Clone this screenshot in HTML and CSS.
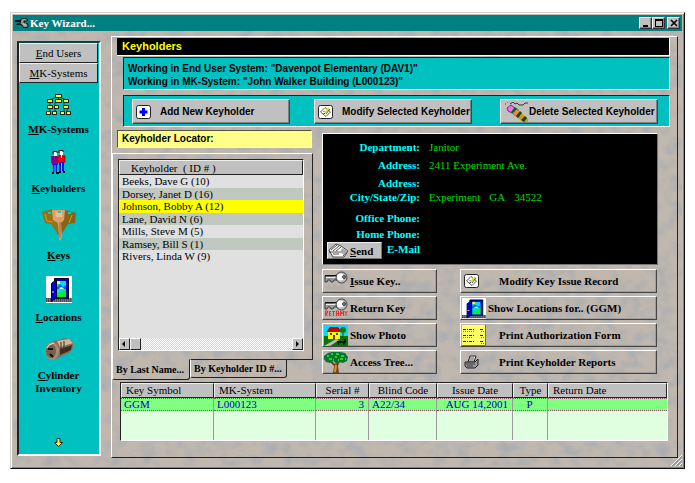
FILE: index.html
```html
<!DOCTYPE html>
<html lang="en">
<head>
<meta charset="utf-8">
<title>Key Wizard</title>
<link rel="stylesheet" href="styles.css">
</head>
<body>
<svg class="defs" aria-hidden="true">
  <defs>
    <filter id="marble" x="0" y="0" width="100%" height="100%" color-interpolation-filters="sRGB">
      <feTurbulence type="fractalNoise" baseFrequency="0.07 0.08" numOctaves="3" seed="7"/>
      <feColorMatrix values="0 0 0 0 0.67  0 0 0 0 0.68  0 0 0 0 0.69  2.6 0 0 0 -1.1"/>
    </filter>
    <symbol id="i-note" viewBox="0 0 15 14">
      <rect x=".5" y=".5" width="14" height="13" rx="2" fill="#fff" stroke="#222"/>
      <path d="M2.500 7 7 2.500l5.500 4.500L8 11.500z" fill="#fff" stroke="#333" stroke-width=".8"/>
      <path d="M5 6.500h2M5 8.500h2" stroke="#777" stroke-width=".7"/>
      <path d="m7 8 4-5" stroke="#dd0" stroke-width="2"/><path d="m8 9 4-5M6 9l1-1" stroke="#222" stroke-width=".7"/>
    </symbol>
    <symbol id="i-door" viewBox="0 0 26 27">
      <path fill="#fff" d="M0 0h26v27H0z"/><path fill="#777" d="M0 22h26v4H0z"/>
      <path d="M0 23h26M0 25h26" stroke="#222" stroke-dasharray="1 1"/>
      <path fill="#00c" stroke="#002" d="M8.500 2.500h14v20h-14z"/>
      <path fill="#0df" d="M11 5h9v16h-9z"/><path fill="#ff0" d="M11 5h3v3h-3z"/>
      <path fill="#06f" d="m11 11 3-3 3 3 3-2v4h-9z"/><path fill="#fff" d="m13 12 3-1 2 2h-4z"/>
      <path fill="#0e3" d="M11 17c4 0 5-3 9-4v8h-9z"/>
      <path fill="#00d" stroke="#002" d="m5.500 7.500 5-4v18l-5 4z"/><path d="M6 16h2" stroke="#ff0"/>
    </symbol>
    <symbol id="i-key" viewBox="0 0 24 21">
      <path d="M1 15h3v-2h2v2h3v-2h3v2h4v-2h5v6H3z" fill="#aaa" opacity=".55"/>
      <path d="M1 5h8l4-1v5h-3l-1 2H7L6 9H4L3 11H1z" fill="#999" stroke="#111" stroke-width=".7"/>
      <path d="M1 4.500h11" stroke="#111"/><path d="M2 6.500h10" stroke="#eee"/>
      <circle cx="17.500" cy="6.500" r="5.500" fill="#bbb" stroke="#222" stroke-width=".8"/><circle cx="16.500" cy="6" r="3.500" fill="#fff"/>
      <circle cx="20" cy="6" r="1.500" fill="#888" stroke="#111" stroke-width=".7"/>
    </symbol>
  </defs>
</svg>

<div class="window">
  <header class="titlebar">
    <svg class="app-icon" viewBox="0 0 14 10"><path d="M0 2h6v2H0zM2 5h5v2H1z" fill="#111"/><path d="m6 1 4-1 3 2-1 1-3 0v2l4 1v3l-4 1-2-3-2-1z" fill="#999" stroke="#111"/><path d="M8 6h3" stroke="#ddd"/></svg>
    <h1>Key Wizard...</h1>
    <div class="window-buttons">
      <button aria-label="Minimize"><svg viewBox="0 0 10 8"><path d="M2 6h5v2H2z"/></svg></button>
      <button aria-label="Maximize"><svg viewBox="0 0 10 8"><path d="M1 0h8v8H1zM2 2v5h6V2z" fill-rule="evenodd"/></svg></button>
      <button class="close" aria-label="Close"><svg viewBox="0 0 10 8"><path d="m2 1 6 6M8 1 2 7" stroke="#000" stroke-width="1.600"/></svg></button>
    </div>
  </header>

  <div class="workspace">
    <svg class="marble" aria-hidden="true"><rect width="100%" height="100%" filter="url(#marble)"/></svg>

    <nav class="sidebar">
      <button class="group"><u>E</u>nd Users</button>
      <button class="group"><u>M</u>K-Systems</button>
      <div class="nav-list">
        <a href="#systems"><span class="pic"><svg width="25" height="21" viewBox="0 0 25 21">
          <path d="M12.500 2v3M4 6l8-4 8 4M4 6v12M9 8v10M12 6v2M18 8v10M21 12v6" stroke="#222" stroke-width=".8" fill="none"/>
          <g fill="#222"><path d="M9 0h7v4H9zM1 5h6v4H1zM9 5h7v4H9zM17 5h6v4h-6zM1 11h6v4H1zM8 11h5v4H8zM17 11h6v4h-6zM0 17h5v4H0zM6 17h5v4H6zM14 17h5v4h-5zM20 17h5v4h-5z"/></g>
          <g fill="#ff0"><path d="M10 1h5v2h-5zM2 6h4v2H2zM10 6h5v2h-5zM18 6h4v2h-4zM2 12h4v2H2zM9 12h3v2H9zM18 12h4v2h-4zM1 18h3v2H1zM7 18h3v2H7zM15 18h3v2h-3zM21 18h3v2h-3z"/></g></svg></span><span><u>M</u>K-Systems</span></a>
        <a href="#keyholders"><span class="pic"><svg width="15" height="24" viewBox="0 0 15 24">
          <path d="M1 6h6v9H1zM0 6h1v7H0z" fill="#808"/><path d="M7 5h7v8H7z" fill="#e00"/><path d="M2 14h4v8H2zM8 12h5v9H8z" fill="#11d"/>
          <path d="M4 15v7M10.500 13v8" stroke="#7bf"/><path d="M3 2h3v4H3zM9 1h3v4H9z" fill="#fff"/><path d="M2 4V1.500h4V3M8 3V.5h4V2" stroke="#111" fill="none"/>
          <path d="M1 23h2M5 23h3M8 22h2M12 22h2" stroke="#000" stroke-width="2"/><path d="M10.500 5v3" stroke="#fff"/><path d="M6.500 7v7M14 6v6M.5 7v6" stroke="#222" stroke-width=".7"/></svg></span><span><u>K</u>eyholders</span></a>
        <a href="#keys"><span class="pic"><svg width="34" height="32" viewBox="0 0 34 32">
          <path d="m0 3 10-3 4 12 6 13-2 3-9-13-6-1z" fill="#9a7012"/><path d="m34 4-11-3-3 10-5 14 3 2 8-12 7-1z" fill="#876414"/>
          <path d="M10 1h13l-1 10-3 3 1 15-3 3-1-18-5-3z" fill="#dda066"/><path d="M18 13v16" stroke="#a76539"/><path d="m13 3 7-1v6h-6z" fill="#f1bc86"/>
          <path d="M6 4h3M16 3h3M26 4h3" stroke="#1cc" stroke-width="2"/><path d="m3 5 2 7 6 1M30 6l-3 8" stroke="#c59b36" fill="none"/></svg></span><span><u>K</u>eys</span></a>
        <a href="#locations"><span class="pic"><svg width="26" height="27"><use href="#i-door"/></svg></span><span><u>L</u>ocations</span></a>
        <a href="#cylinders"><span class="pic"><svg width="30" height="23" viewBox="0 0 30 23">
          <path d="M6 4 22 0l7 3v7l-4 5-13 6z" fill="#87705a"/><path d="m13 3 12-2 4 4-13 4z" fill="#d4b59a"/><path d="m16 11 12-4-1 5-11 5z" fill="#3c2c25"/>
          <ellipse cx="8" cy="13" rx="7" ry="9" fill="#a98a70"/><ellipse cx="7" cy="13" rx="5" ry="7" fill="#77604f"/><path d="M4 11h5M6 16l3 3" stroke="#111" stroke-width="2"/><path d="m5 7 5-2M3 10l2-3" stroke="#f6dfcc"/><path d="M17 4v12M20 3v12" stroke="#413027"/></svg></span><span><u>C</u>ylinder<br>Inventory</span></a>
      </div>
      <button class="more" aria-label="More"><svg width="9" height="9" viewBox="0 0 9 9"><path d="M3 .5h3v4h2.500l-4 4-4-4H3z" fill="#ff0" stroke="#222"/></svg></button>
    </nav>

    <main class="panel">
      <div class="top">
        <h2>Keyholders</h2>
        <div class="context">
          <p>Working in End User System: "Davenpot Elementary (DAV1)"</p>
          <p>Working in MK-System: "John Walker Building (L000123)"</p>
        </div>
        <div class="toolbar">
          <button><svg width="15" height="14" viewBox="0 0 15 14"><rect x=".5" y=".5" width="14" height="13" rx="2" fill="#fff" stroke="#222"/><path d="M7.500 3v8M3.500 7h8" stroke="#00f" stroke-width="3"/></svg><span>Add New Keyholder</span></button>
          <button><svg width="15" height="14"><use href="#i-note"/></svg><span>Modify Selected Keyholder</span></button>
          <button class="delete"><svg width="24" height="20" viewBox="0 0 24 20"><path d="M6 2 9 0l2 2 2-1 2 2h4l2-2h3M1 2h1M3 0h1" fill="none" stroke="#111" stroke-width=".8"/><path d="m3 6 4-3 4 3-3 5-4-2z" fill="#f6f" stroke="#222" stroke-width=".7"/><path d="m7 10 4-5 4 3-4 6z" fill="#062"/><path d="m9 11 4-4 2 2-4 5z" fill="#e84"/><path d="m11 14 4-5 9 8v3h-5z" fill="#d90"/><path d="m12 14 4-5 2 2-4 5zm5 4 4-4 2 2-3 4z" fill="#142"/></svg><span>Delete Selected Keyholder</span></button>
        </div>
      </div>

      <div class="middle">
        <section class="finder">
          <div class="locator"><label for="locator">Keyholder Locator:</label><input id="locator" type="text"></div>
          <div class="list-panel">
            <div class="list">
              <button class="list-head">Keyholder&nbsp; ( ID # )</button>
              <ul>
                <li>Beeks, Dave G (10)</li>
                <li>Dorsey, Janet D (16)</li>
                <li class="selected">Johnson, Bobby A (12)</li>
                <li>Lane, David N (6)</li>
                <li>Mills, Steve M (5)</li>
                <li>Ramsey, Bill S (1)</li>
                <li>Rivers, Linda W (9)</li>
              </ul>
              <div class="scrollbar">
                <button aria-label="Scroll left"><svg viewBox="0 0 8 8"><path d="M5 1v6L2 4z"/></svg></button>
                <span class="thumb"></span>
                <button class="right" aria-label="Scroll right"><svg viewBox="0 0 8 8"><path d="M3 1v6l3-3z"/></svg></button>
              </div>
            </div>
          </div>
          <div class="tabs"><button class="active">By Last Name...</button><button>By Keyholder ID #...</button></div>
        </section>

        <section class="record">
          <dl class="details">
            <dt>Department:</dt><dd>Janitor</dd>
            <dt>Address:</dt><dd>2411 Experiment Ave.</dd>
            <dt>Address:</dt><dd></dd>
            <dt>City/State/Zip:</dt><dd><span>Experiment</span><span>GA</span><span>34522</span></dd>
            <dt>Office Phone:</dt><dd></dd>
            <dt>Home Phone:</dt><dd></dd>
            <dt class="mail"><button><svg width="21" height="15" viewBox="0 0 21 15"><path d="m1 7 7-6 5 2 7 5-4 6H5z" fill="#fff" stroke="#222" stroke-width=".8"/><path d="m3 7 6-5M5 8l6-5M8 8l5-4M1 9h14M5 11h6M15 13l5-5" stroke="#222" stroke-width=".8"/><path d="m14 5 6 3-4 4-4-3z" fill="#aaa"/></svg><span><u>S</u>end</span></button><span>E-Mail</span></dt><dd></dd>
          </dl>
          <div class="actions">
            <button><svg width="24" height="21"><use href="#i-key"/></svg><span><u>I</u>ssue Key..</span></button>
            <button class="small-icon"><svg width="15" height="14"><use href="#i-note"/></svg><span>Modify Key Issue Record</span></button>
            <button><svg width="24" height="21" viewBox="0 0 24 21"><use href="#i-key" width="24" height="21"/><path d="M1.500 18v-5h2v2h-2l2 3M7 13.500H5.500v4H7M5.500 15.500H7M8 13.500h3M9.500 13v5M12.500 18v-5h2v5M12.500 15.500h2M16.500 18v-5l1.500 3 1.500-3v5M20.500 13l1.500 2 1.500-2M22 15v3" stroke="#e22" stroke-width=".9" fill="none"/></svg><span>Return Key</span></button>
            <button><svg width="24" height="21" viewBox="0 0 26 27" preserveAspectRatio="none"><use href="#i-door" width="26" height="27"/></svg><span>Show Locations for.. (GGM)</span></button>
            <button><svg width="24" height="21" viewBox="0 0 24 21"><path fill="#0df" d="M0 0h24v13H0z"/><path fill="#070" d="M0 11h24v10H0z"/><path fill="#ff0" d="M4 6h12v8H4z"/><path d="m2 7 4-5h8l4 5z" fill="#c00"/><path d="M6 8h2v2H6zM12 8h2v2h-2zM9 10h2v4H9z" fill="#730"/><path d="M0 21 12 14l3 1-9 6z" fill="#bbb"/><circle cx="19" cy="5" r="3" fill="#270"/><path d="M19 8v6" stroke="#630"/><path d="M13 16h7v-2h2v3l-2 3h-1v-2h-4v2h-1z" fill="#111"/></svg><span>Show Photo</span></button>
            <button class="form-icon"><svg width="24" height="21" viewBox="0 0 24 21"><path fill="#ff6" d="M0 0h24v21H0z"/><path d="M1 4.500h12M18 4.500h4M1 10.500h11M18 10.500h3M1 16.500h11M18 16.500h4" stroke="#222" stroke-dasharray="3 1 1 1"/><path d="M1 6.500h11M1 12.500h9M19 6.500h3M19 12.500h3M19 18.500h3" stroke="#777" stroke-dasharray="1 1"/><path d="M0 20.500h23.500V0" stroke="#870" fill="none"/></svg><span>Print Authorization Form</span></button>
            <button><svg width="24" height="21" viewBox="0 0 24 21"><path d="m9 21 1-7-6-6 2-1 5 5 4-6 2 1-3 7 1 7z" fill="#741"/><path d="m11 20 1-7" stroke="#c94" stroke-width="2"/><path d="M0 4 4 1l4-1h8l5 1 3 4-1 4-4 2-4-1-3 1-3-2-3 2-4-1-2-3z" fill="#073"/><path d="M3 4h2M7 2h2M12 2h3M17 4h3M5 7h3M11 5h2M16 7h3M21 7h1M9 8h1M14 8h1" stroke="#3c2" stroke-width="2"/></svg><span>Access Tree...</span></button>
            <button class="small-icon"><svg width="15" height="14" viewBox="0 0 15 14"><path d="m4 7 2-6h6l-2 6z" fill="#fff" stroke="#222"/><path d="M1 7h10l3-3v6l-3 3H3l-2-2z" fill="#999" stroke="#222"/><path d="M2 9h9M3 11h6M6 3h4M5 5h5" stroke="#222" stroke-width=".8"/></svg><span>Print Keyholder Reports</span></button>
          </div>
        </section>
      </div>

      <table class="issues">
        <colgroup><col class="w-symbol"><col class="w-system"><col class="w-serial"><col class="w-blind"><col class="w-date"><col class="w-type"><col></colgroup>
        <thead><tr><th>Key Symbol</th><th>MK-System</th><th class="mid">Serial #</th><th class="mid">Blind Code</th><th class="mid">Issue Date</th><th class="mid">Type</th><th>Return Date</th></tr></thead>
        <tbody>
          <tr class="current"><td>GGM</td><td>L000123</td><td class="end">3</td><td>A22/34</td><td class="end">AUG 14,2001</td><td class="mid">P</td><td></td></tr>
          <tr class="empty"><td></td><td></td><td></td><td></td><td></td><td></td><td></td></tr>
        </tbody>
      </table>
    </main>
    <svg class="grip" width="11" height="11" viewBox="0 0 11 11"><path d="M0 11 11 0M4 11l7-7M8 11l3-3" stroke="#fff"/><path d="M1 11.500 11.500 1M5 11.500 11.500 5M9 11.500 11.500 9" stroke="#777"/></svg>
  </div>
</div>
</body>
</html>
```
FILE: styles.css
```css
* { box-sizing: border-box; }

body {
  margin: 0;
  padding: 12px 10px;
  background: #fff;
  color: #000;
  font: 11px/14px "Liberation Serif", serif;
}

h1, h2, p, ul, dl, dd { margin: 0; padding: 0; }
ul { list-style: none; }
svg { display: block; flex: none; overflow: hidden; }
.defs { position: absolute; width: 0; height: 0; }

button {
  display: flex;
  align-items: center;
  margin: 0;
  padding: 0;
  background: #c0c0c0;
  color: #000;
  border: 1px solid;
  border-color: #fff #333 #333 #fff;
  font: inherit;
  white-space: nowrap;
}

.window {
  border: 1px solid;
  border-color: #d4d0cc #111 #111 #d4d0cc;
  background: #c0bab4;
  padding: 2px;
  box-shadow: inset 1px 1px #fff, inset -1px -1px #808080;
}

.titlebar {
  display: flex;
  align-items: center;
  height: 16px;
  padding: 0 2px;
  background: #008080;
}
.app-icon { width: 14px; height: 10px; }
.titlebar h1 {
  flex: 1;
  margin-left: 1px;
  color: #fff;
  font: bold 11px/14px "Liberation Serif", serif;
}
.window-buttons { display: flex; }
.window-buttons button {
  width: 13px;
  height: 12px;
  justify-content: center;
  box-shadow: inset -1px -1px #808080;
}
.window-buttons svg { width: 10px; height: 8px; }
.window-buttons .close { margin-left: 2px; }

.workspace {
  position: relative;
  display: flex;
  align-items: flex-start;
  gap: 10px;
  padding: 5px 4px 8px;
  background: #c0b7af;
}
.marble { position: absolute; inset: 0; width: 100%; height: 100%; }
.grip { position: absolute; right: 0; bottom: 0; }

.sidebar {
  position: relative;
  display: flex;
  flex-direction: column;
  align-self: stretch;
  width: 84px;
  margin: 5px 0 2px;
  padding: 0 1px 7px 0;
  background: #00c0c0;
  border: 2px solid;
  border-color: #004848 #fff #fff #222;
}
.group {
  justify-content: center;
  height: 20px;
  border-color: #eee #222 #222 #eee;
}
.nav-list {
  display: flex;
  flex-direction: column;
  flex: 1;
  gap: 14px;
  padding-top: 11px;
}
.nav-list a {
  display: flex;
  flex-direction: column;
  align-items: center;
  gap: 8px;
  color: #000;
  font-weight: bold;
  line-height: 13px;
  text-align: center;
  text-decoration: none;
}
.more { align-self: center; background: none; border: 0; }

.panel {
  position: relative;
  flex: 1;
  min-width: 0;
  padding: 1px 7px 16px 5px;
  border: 1px solid;
  border-color: #fff #222 #222 #fff;
}
.top {
  font: bold 10px/14px "Liberation Sans", sans-serif;
}
.top h2 {
  height: 18px;
  padding: 0 5px;
  background: #000;
  color: #ff0;
  border-right: 1px solid #fff;
  border-bottom: 1px solid #fff;
  font: bold 11px/16px "Liberation Sans", sans-serif;
}
.context {
  margin: 1px 0 5px 6px;
  padding: 4px 4px 1px;
  background: #00c0c0;
  border: 1px solid;
  border-color: #222 #fff #fff #222;
  line-height: 13px;
}
.toolbar {
  display: flex;
  gap: 24px;
  margin-left: 6px;
  padding: 3px 11px 2px 8px;
  background: #00c0c0;
  border: 1px solid;
  border-color: #222 #fff #fff #222;
}
.toolbar button {
  gap: 9px;
  width: 158px;
  height: 25px;
  padding: 0 3px;
  border-color: #fff #444 #444 #fff;
  box-shadow: inset -1px -1px #808080;
}
.toolbar .delete { gap: 1px; margin-left: auto; }

.middle {
  display: flex;
  align-items: flex-start;
  gap: 9px;
  margin-top: 3px;
}
.finder { width: 201px; flex: none; margin-left: -5px; }
.locator {
  display: flex;
  height: 18px;
  margin: 0 1px 5px 5px;
  padding-left: 4px;
  background: #ff8;
  border: 1px solid;
  border-color: #554 #fff #fff #554;
  font: bold 10px/15px "Liberation Sans", sans-serif;
}
.locator input {
  flex: 1;
  min-width: 0;
  border: 0;
  background: none;
  font: inherit;
  outline: 0;
}
.list-panel {
  padding: 5px 8px 8px 5px;
  border: 1px solid;
  border-color: #fff #222 transparent #fff;
}
.list {
  display: flex;
  flex-direction: column;
  height: 192px;
  background: #e0e0e0;
  border: 1px solid;
  border-color: #222 #fff #fff #222;
}
.list-head {
  height: 15px;
  padding: 0 11px;
  font-size: 11px;
  border-color: #eee #222 #222 #eee;
}
.list ul {
  display: grid;
  grid-template-rows: repeat(7, 1fr);
  height: 88px;
}
.list li {
  min-height: 0;
  padding-left: 3px;
  line-height: 12px;
}
.list li:nth-child(even) { background: #c0c8c0; }
.list .selected { background: #ff0; }
.scrollbar {
  display: flex;
  height: 12px;
  margin-top: auto;
  background: repeating-conic-gradient(#fff 0 25%, #d4d4d4 0 50%) 0 0 / 2px 2px;
}
.scrollbar button, .thumb {
  width: 11px;
  background: #c0c0c0;
  border: 1px solid;
  border-color: #fff #222 #222 #fff;
}
.scrollbar svg { width: 8px; height: 8px; }
.scrollbar .right { margin-left: auto; }

.tabs {
  display: flex;
  align-items: flex-start;
  margin-top: -1px;
  font-size: 10px;
  font-weight: bold;
}
.tabs::after { content: ""; flex: 1; border-top: 1px solid #222; }
.tabs button {
  height: 19px;
  padding: 0 4px 0 3px;
  background: none;
  border-color: #222 #222 #222 #fff;
  border-radius: 0 0 3px 3px;
}
.tabs .active { height: 21px; padding-right: 5px; border-top-color: transparent; }

.record { flex: 1; min-width: 0; padding: 3px 12px 0 0; }
.details {
  display: grid;
  grid-template-columns: 93px 1fr;
  grid-template-rows: 18px 18px 14px 21px 16px 18px;
  column-gap: 9px;
  height: 132px;
  padding: 6px 4px 0;
  background: #000;
  color: #0d0;
  border: 1px solid;
  border-color: #fff #777 #777 #fff;
}
.details dt { color: #0ff; font-weight: bold; text-align: right; }
.details dd { display: flex; gap: 9px; }
.details .mail {
  display: flex;
  justify-content: space-between;
  align-items: flex-start;
  margin-top: -3px;
}
.mail button {
  width: 55px;
  height: 17px;
  gap: 1px;
  font-weight: bold;
  border-color: #eee #777 #777 #eee;
}

.actions {
  display: grid;
  grid-template-columns: 115px 197px;
  justify-content: space-between;
  gap: 3px 0;
  margin-top: 4px;
  padding-right: 1px;
}
.actions button {
  height: 24px;
  padding-left: 1px;
  gap: 2px;
  font-weight: bold;
  background: none;
  border-color: #fff #444 #444 #fff;
  box-shadow: inset -1px -1px #8888;
}
.actions .small-icon { padding-left: 3px; gap: 20px; }
.actions .form-icon { gap: 13px; }

.issues {
  width: calc(100% - 5px);
  margin: 2px 0 0 3px;
  table-layout: fixed;
  border-collapse: separate;
  border-spacing: 0;
  border: 1px solid;
  border-color: #222 #fff #fff #222;
}
.w-symbol { width: 93px; }
.w-system { width: 102px; }
.w-serial { width: 53px; }
.w-blind { width: 68px; }
.w-date { width: 76px; }
.w-type { width: 35px; }
.issues th, .issues td { padding: 0 4px 0 3px; text-align: left; white-space: nowrap; }
.issues th {
  height: 15px;
  padding-left: 4px;
  background: #c0c0c0;
  border: 1px solid;
  border-color: #eee #222 #222 #eee;
  font-weight: normal;
  line-height: 13px;
}
.issues td {
  background: #e0ffe0;
  border-right: 1px solid #999;
  color: #00c;
}
.issues td:last-child { border-right: 0; }
.issues .current td {
  height: 13px;
  line-height: 11px;
  background: #80ff80;
  border-top: 1px dotted #856;
  border-bottom: 1px dotted #856;
}
.issues .empty td { height: 29px; }
.issues .mid { text-align: center; }
.issues .end { text-align: right; }
```
